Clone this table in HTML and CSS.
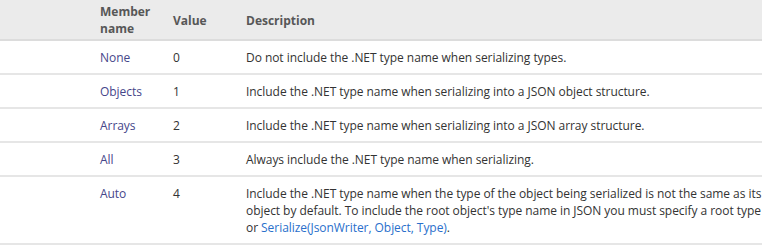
FILE: index.html
```html
<!DOCTYPE html>
<html lang="en">

<head>
    <meta charset="utf-8">
    <title>TypeNameHandling Enumeration</title>
    <link rel="stylesheet" href="styles.css">
</head>

<body>
    <div class="members">
        <table class="members-table">
            <thead>
                <tr>
                    <th class="icon-col"></th>
                    <th class="name-col">Member name</th>
                    <th class="value-col">Value</th>
                    <th class="desc-col">Description</th>
                </tr>
            </thead>
            <tbody>
                <tr>
                    <td></td>
                    <td class="name">None</td>
                    <td>0</td>
                    <td>Do not include the .NET type name when serializing types.</td>
                </tr>
                <tr>
                    <td></td>
                    <td class="name">Objects</td>
                    <td>1</td>
                    <td>Include the .NET type name when serializing into a JSON object structure.</td>
                </tr>
                <tr>
                    <td></td>
                    <td class="name">Arrays</td>
                    <td>2</td>
                    <td>Include the .NET type name when serializing into a JSON array structure.</td>
                </tr>
                <tr>
                    <td></td>
                    <td class="name">All</td>
                    <td>3</td>
                    <td>Always include the .NET type name when serializing.</td>
                </tr>
                <tr>
                    <td></td>
                    <td class="name">Auto</td>
                    <td>4</td>
                    <td>Include the .NET type name when the type of the object being serialized is not the same as its<br>
                        object by default. To include the root object's type name in JSON you must specify a root type<br>
                        or <a href="#">Serialize(JsonWriter, Object, Type)</a>.</td>
                </tr>
            </tbody>
        </table>
    </div>
</body>

</html>
```

FILE: styles.css
```css
* {
    padding: 0;
    margin: 0;
    box-sizing: border-box;
}

body {
    background-color: #ffffff;
    font-family: 'Open Sans', 'Noto Sans', sans-serif;
    font-size: 12px;
    color: #333333;
}

.members {
    width: 762px;
    overflow: hidden;
}

.members-table {
    border-collapse: collapse;
    table-layout: fixed;
    width: 762px;
}

.members-table th {
    background-color: #ebebeb;
    color: #575757;
    font-weight: 700;
    text-align: left;
    vertical-align: middle;
    line-height: 17px;
    padding: 3px 10px 2px 10px;
    border-bottom: 2px solid #dcdcdc;
}

.members-table td {
    vertical-align: top;
    line-height: 17px;
    padding: 7.5px 10px;
    border-bottom: 2px solid #e6e6e6;
    white-space: nowrap;
    letter-spacing: -0.05px;
}

.desc-col {
    width: 526px;
}

.icon-col {
    width: 90px;
}

.name-col {
    width: 73px;
}

.value-col {
    width: 73px;
}

.members-table td.name {
    color: #46468a;
}

.members-table a {
    color: #2a6fcb;
    text-decoration: none;
}
```
